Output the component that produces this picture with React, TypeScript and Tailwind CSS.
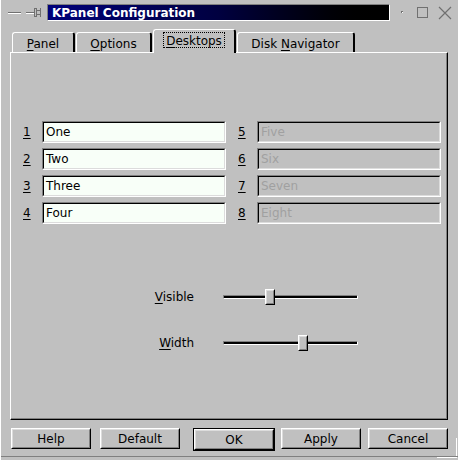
import React from "react";

function U({ children }: { children: React.ReactNode }) {
  return <span className="underline underline-offset-[2px] decoration-[1px]">{children}</span>;
}

function Field({ num, text, disabled }: { num: string; text: string; disabled?: boolean }) {
  return (
    <div className="flex items-center h-[22px]">
      <div className="w-[20px] pl-[1px]">
        <U>{num}</U>
      </div>
      <div className="w-[184px] h-[22px] border border-t-[#808080] border-l-[#808080] border-b-white border-r-white">
        <div
          className={
            "w-full h-full border border-t-black border-l-black border-b-[#dcdcdc] border-r-[#dcdcdc] flex items-center pl-[2px] " +
            (disabled ? "bg-[#c0c0c0] text-[#a0a0a0]" : "bg-[#f8fff8] text-black")
          }
        >
          {text}
        </div>
      </div>
    </div>
  );
}

function Slider({ mnemonic, rest, pos }: { mnemonic: string; rest: string; pos: number }) {
  return (
    <div className="flex items-center h-[16px]">
      <div className="w-[172px] text-right">
        <U>{mnemonic}</U>
        {rest}
      </div>
      <div className="ml-[29px] w-[135px] h-[16px] relative flex items-center">
        <div className="w-full h-[4px] border-t border-l border-t-[#808080] border-l-[#808080] border-b border-r border-b-white border-r-white">
          <div className="w-full h-full bg-black"></div>
        </div>
        <div
          className="absolute top-0 w-[10px] h-[16px] bg-[#c0c0c0] border border-t-white border-l-white border-b-black border-r-black"
          style={{ left: pos }}
        >
          <div className="w-full h-full border border-t-[#dcdcdc] border-l-[#dcdcdc] border-b-[#808080] border-r-[#808080]"></div>
        </div>
      </div>
    </div>
  );
}

function Button({ children, isDefault, ml }: { children: React.ReactNode; isDefault?: boolean; ml: string }) {
  const inner = (
    <div className="w-[80px] h-[21px] border border-t-white border-l-white border-b-black border-r-black bg-[#c0c0c0]">
      <div className="w-full h-full border border-t-[#dcdcdc] border-l-[#dcdcdc] border-b-[#808080] border-r-[#808080] flex items-center justify-center pt-[1px]">
        {children}
      </div>
    </div>
  );
  return isDefault ? (
    <div className={ml + " border border-black"}>{inner}</div>
  ) : (
    <div className={ml}>{inner}</div>
  );
}

function Tab({ children, w, selected, ml }: { children: React.ReactNode; w: string; selected?: boolean; ml?: string }) {
  return (
    <div
      className={
        (ml ?? "") +
        " " +
        w +
        " bg-[#c0c0c0] border-t border-l border-t-white border-l-white border-r-2 border-r-black rounded-tl-[3px] rounded-tr-[3px] flex justify-center " +
        (selected ? "h-[24px] -mb-[1px] relative z-10 pt-[5px]" : "h-[20px] pt-[5px]")
      }
    >
      {children}
    </div>
  );
}

export default function App() {
  return (
    <div className="w-[458px] h-[460px] bg-[#c0c0c0] relative overflow-hidden font-['DejaVu_Sans',sans-serif] text-[12px] text-black leading-none border-l border-l-white">
      {/* title row */}
      <div className="flex items-center h-[17px] mt-[4px]">
        <div className="w-[46px] h-full flex items-center">
          <svg width="46" height="17" viewBox="0 0 46 17">
            <line x1="7" y1="8.5" x2="20" y2="8.5" stroke="#707070" />
            <line x1="7" y1="9.5" x2="20" y2="9.5" stroke="#ffffff" />
            <line x1="25" y1="8.5" x2="33" y2="8.5" stroke="#707070" />
            <line x1="25" y1="9.5" x2="33" y2="9.5" stroke="#ffffff" />
            <rect x="33.5" y="4.5" width="2" height="8" fill="none" stroke="#707070" />
            <rect x="35.5" y="6.5" width="4" height="4" fill="none" stroke="#707070" />
            <line x1="39.5" y1="4" x2="39.5" y2="13" stroke="#707070" />
          </svg>
        </div>
        <div className="w-[344px] h-full border border-t-[#808080] border-l-[#808080] border-b-white border-r-white bg-gradient-to-r from-[#00007a] via-[#000040] to-black text-white font-bold text-[12px] flex items-center pl-[4px]">
          KPanel Configuration
        </div>
        <div className="flex-1 h-full">
          <svg width="68" height="17" viewBox="0 0 68 17">
            <rect x="11" y="7" width="2" height="2" fill="#707070" />
            <rect x="12" y="8" width="1" height="1" fill="#ffffff" />
            <rect x="27.5" y="3.5" width="10" height="10" fill="none" stroke="#707070" />
            <path d="M49 3 L61 15 M61 3 L49 15" stroke="#707070" strokeWidth="1.2" fill="none" />
          </svg>
        </div>
      </div>

      {/* tabs */}
      <div className="flex items-end h-[31px] pl-[11px]">
        <Tab w="w-[63px]">
          <span>
            <U>P</U>anel
          </span>
        </Tab>
        <Tab w="w-[76px]" ml="ml-[1px]">
          <span>
            <U>O</U>ptions
          </span>
        </Tab>
        <Tab w="w-[83px]" ml="ml-[1px]" selected>
          <span className="border border-dotted border-black px-[2px] h-[16px] -mt-[3px] pt-[2px]">
            <U>D</U>esktops
          </span>
        </Tab>
        <Tab w="w-[118px]" ml="ml-[1px]">
          <span>
            Disk <U>N</U>avigator
          </span>
        </Tab>
      </div>

      {/* pane */}
      <div className="ml-[9px] w-[438px] h-[368px] border-t border-l border-t-white border-l-white border-b border-r border-b-black border-r-black">
        <div className="w-full h-full border-b border-r border-b-[#808080] border-r-[#808080] pt-[68px] pl-[11px]">
          <div className="flex">
            <div className="flex flex-col gap-[5px]">
              <Field num="1" text="One" />
              <Field num="2" text="Two" />
              <Field num="3" text="Three" />
              <Field num="4" text="Four" />
            </div>
            <div className="flex flex-col gap-[5px] ml-[11px]">
              <Field num="5" text="Five" disabled />
              <Field num="6" text="Six" disabled />
              <Field num="7" text="Seven" disabled />
              <Field num="8" text="Eight" disabled />
            </div>
          </div>
          <div className="mt-[65px] flex flex-col gap-[30px]">
            <Slider mnemonic="V" rest="isible" pos={42} />
            <Slider mnemonic="W" rest="idth" pos={75} />
          </div>
        </div>
      </div>

      {/* buttons */}
      <div className="flex mt-[8px]">
        <Button ml="ml-[10px]">Help</Button>
        <Button ml="ml-[9px]">Default</Button>
        <Button ml="ml-[13px]" isDefault>
          OK
        </Button>
        <Button ml="ml-[6px]">Apply</Button>
        <Button ml="ml-[7px]">Cancel</Button>
      </div>

      {/* window resize corner */}
      <div className="absolute right-[1px] bottom-[2px] w-[20px] h-[20px] border-b border-r border-b-white border-r-white"></div>
      <div className="absolute left-0 right-0 bottom-[3px] h-px bg-[#808080]"></div>
    </div>
  );
}
